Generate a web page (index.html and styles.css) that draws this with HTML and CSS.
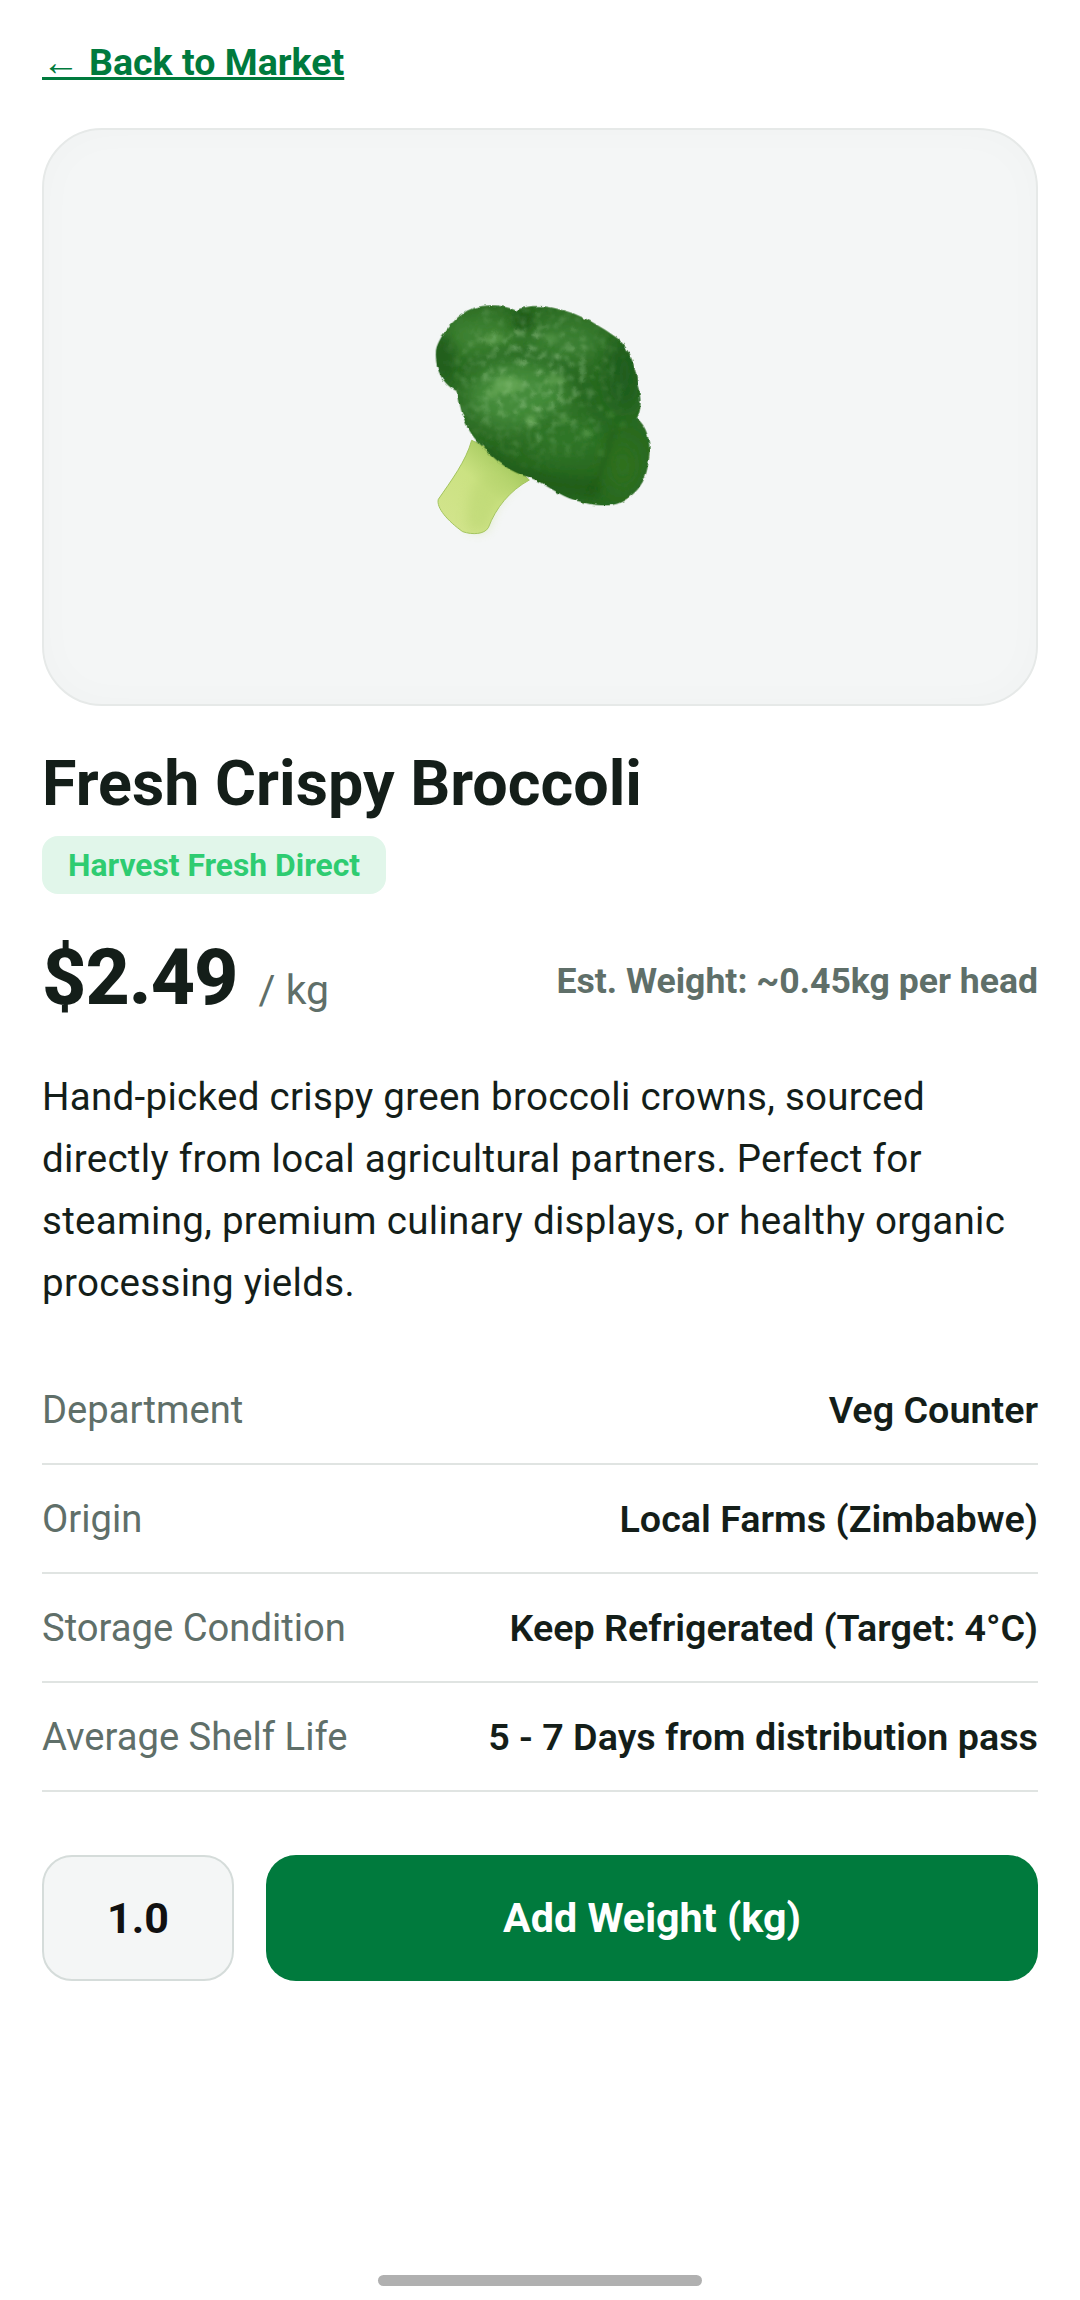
FILE: index.html

```html
<!DOCTYPE html>
<html lang="en">
<head>
  <meta charset="UTF-8" />
  <meta name="viewport" content="width=device-width, initial-scale=1.0"/>
  <title>Fresh Crispy Broccoli</title>
  <link rel="stylesheet" href="styles.css">
</head>
<body>
  <div class="container">
    <a class="back-link" href="#">← Back to Market</a>

    <div class="product-image">
      <svg class="broccoli" viewBox="0 0 840 810" width="280" height="270" aria-hidden="true">
        <defs>
          <filter id="rough" filterUnits="userSpaceOnUse" x="0" y="0" width="840" height="810">
            <feTurbulence type="fractalNoise" baseFrequency="0.05" numOctaves="2" seed="7"/>
            <feDisplacementMap in="SourceGraphic" scale="10" xChannelSelector="R" yChannelSelector="G"/>
          </filter>
          <filter id="mottle" filterUnits="userSpaceOnUse" x="0" y="0" width="840" height="810">
            <feTurbulence type="fractalNoise" baseFrequency="0.045" numOctaves="3" seed="11"/>
            <feColorMatrix values="0 0 0 0 0.42  0 0 0 0 0.68  0 0 0 0 0.36  4 0 0 0 -2.1"/>
            <feGaussianBlur stdDeviation="3"/>
          </filter>
          <filter id="soft" filterUnits="userSpaceOnUse" x="0" y="0" width="840" height="810"><feGaussianBlur stdDeviation="3"/></filter>
          <filter id="blur-big" filterUnits="userSpaceOnUse" x="0" y="0" width="840" height="810"><feGaussianBlur stdDeviation="30"/></filter>
          <filter id="blur-mid" filterUnits="userSpaceOnUse" x="0" y="0" width="840" height="810"><feGaussianBlur stdDeviation="16"/></filter>
          <filter id="blur-small" filterUnits="userSpaceOnUse" x="0" y="0" width="840" height="810"><feGaussianBlur stdDeviation="7"/></filter>
          <linearGradient id="stem" x1="0.1" y1="0.9" x2="0.7" y2="0.2">
            <stop offset="0" stop-color="#d2e48c"/>
            <stop offset="0.6" stop-color="#cbe282"/>
            <stop offset="1" stop-color="#a9cc62"/>
          </linearGradient>
          <radialGradient id="mottle-fade" gradientUnits="userSpaceOnUse" cx="400" cy="290" r="300">
            <stop offset="0.4" stop-color="#fff"/>
            <stop offset="1" stop-color="#000"/>
          </radialGradient>
          <mask id="mottle-mask" maskUnits="userSpaceOnUse" x="0" y="0" width="840" height="810">
            <rect width="840" height="810" fill="url(#mottle-fade)"/>
          </mask>
          <clipPath id="crown-clip">
            <path d="M105 215C115 170 170 105 215 90C260 75 310 80 345 97C375 78 440 78 500 100C550 115 600 145 650 180C690 215 705 270 710 320C722 360 722 395 708 420C745 450 752 510 742 555C735 600 720 640 660 672C620 690 570 680 520 665C480 655 440 620 385 597C330 585 280 545 245 505C205 470 180 420 170 340C130 320 100 280 105 215Z"/>
          </clipPath>
        </defs>
        <path d="M212 478C195 540 150 600 112 655C105 680 140 720 185 752C215 762 250 760 262 740C285 680 325 630 385 597L300 520Z" fill="url(#stem)" stroke="#a3c45f" stroke-width="3"/>
        <path d="M225 600C205 640 190 690 200 745C225 755 250 755 262 740C272 695 300 645 340 610L270 570Z" fill="#b4d26b" opacity="0.4" filter="url(#blur-mid)"/>
        <g transform="translate(0 -8)">
          <g filter="url(#rough)">
            <g clip-path="url(#crown-clip)">
              <g filter="url(#soft)">
                <rect width="840" height="810" fill="#2a6a22"/>
                <ellipse cx="240" cy="175" rx="120" ry="65" fill="#3c8232" filter="url(#blur-big)"/>
                <ellipse cx="490" cy="190" rx="120" ry="65" fill="#3a7f30" filter="url(#blur-big)"/>
                <ellipse cx="350" cy="350" rx="150" ry="100" fill="#458c3b" filter="url(#blur-big)"/>
                <ellipse cx="500" cy="470" rx="120" ry="70" fill="#2f7427" filter="url(#blur-big)"/>
                <ellipse cx="125" cy="240" rx="35" ry="70" fill="#215f1c" filter="url(#blur-mid)"/>
                <ellipse cx="365" cy="125" rx="28" ry="30" fill="#1d5618" filter="url(#blur-mid)"/>
                <path d="M180 280C230 215 400 200 500 270C545 310 590 400 620 480" fill="none" stroke="#246420" stroke-width="22" opacity="0.55" filter="url(#blur-mid)"/>
                <path d="M230 510C300 590 440 630 600 630" fill="none" stroke="#1f5a19" stroke-width="60" opacity="0.75" filter="url(#blur-mid)"/>
                <ellipse cx="670" cy="290" rx="45" ry="110" fill="#1f5c1a" filter="url(#blur-big)"/>
                <ellipse cx="665" cy="560" rx="50" ry="80" fill="#2f701f" filter="url(#blur-big)"/>
                <path d="M640 450C615 520 600 600 565 650" fill="none" stroke="#1f5718" stroke-width="12" opacity="0.5" filter="url(#blur-small)"/>
                <g mask="url(#mottle-mask)">
                  <rect width="840" height="810" filter="url(#mottle)" opacity="0.5"/>
                </g>
                <g fill="#73b260" filter="url(#blur-small)">
                  <ellipse cx="320" cy="320" rx="44" ry="26" opacity="0.6"/>
                  <ellipse cx="275" cy="345" rx="22" ry="14" opacity="0.5"/>
                  <ellipse cx="460" cy="305" rx="26" ry="14" opacity="0.5"/>
                  <ellipse cx="280" cy="180" rx="30" ry="16" opacity="0.4"/>
                  <ellipse cx="450" cy="180" rx="20" ry="14" opacity="0.35"/>
                  <ellipse cx="390" cy="425" rx="16" ry="16" opacity="0.6"/>
                  <ellipse cx="493" cy="425" rx="13" ry="9" opacity="0.55"/>
                  <ellipse cx="558" cy="465" rx="16" ry="9" opacity="0.6"/>
                  <ellipse cx="600" cy="522" rx="9" ry="7" opacity="0.4"/>
                  <ellipse cx="630" cy="408" rx="10" ry="9" opacity="0.35"/>
                  <ellipse cx="665" cy="440" rx="9" ry="7" opacity="0.3"/>
                </g>
              </g>
            </g>
          </g>
        </g>
      </svg>
    </div>

    <h1 class="product-title">Fresh Crispy Broccoli</h1>
    <span class="tag">Harvest Fresh Direct</span>

    <div class="price-row">
      <div class="price">$2.49 <span class="unit">/ kg</span></div>
      <div class="est-weight">Est. Weight: ~0.45kg per head</div>
    </div>

    <p class="description">Hand-picked crispy green broccoli crowns, sourced directly from local agricultural partners. Perfect for steaming, premium culinary displays, or healthy organic processing yields.</p>

    <div class="spec-list">
      <div class="spec-row"><span class="spec-label">Department</span><span class="spec-value">Veg Counter</span></div>
      <div class="spec-row"><span class="spec-label">Origin</span><span class="spec-value">Local Farms (Zimbabwe)</span></div>
      <div class="spec-row"><span class="spec-label">Storage Condition</span><span class="spec-value">Keep Refrigerated (Target: 4°C)</span></div>
      <div class="spec-row"><span class="spec-label">Average Shelf Life</span><span class="spec-value">5 - 7 Days from distribution pass</span></div>
    </div>

    <div class="actions">
      <div class="qty">1.0</div>
      <button class="btn">Add Weight (kg)</button>
    </div>
  </div>

  <div class="home-bar"></div>
</body>
</html>
```

FILE: styles.css

```css
* {
  margin: 0;
  padding: 0;
  box-sizing: border-box;
  font-family: 'Roboto', sans-serif;
}
body {
  background: #fff;
  color: #141e19;
  width: 1080px;
  height: 2300px;
  position: relative;
  overflow: hidden;
}
.container {
  padding: 40px 42px 0;
}
.back-link {
  display: inline-block;
  color: #007a3d;
  font-size: 37.6px;
  line-height: 44px;
  font-weight: 700;
  text-decoration: underline;
  text-decoration-thickness: 3px;
}
.product-image {
  margin-top: 44px;
  height: 578px;
  background: #f4f6f6;
  border: 2px solid #e6e9e8;
  border-radius: 60px;
  box-shadow: inset 0 0 44px rgba(0, 0, 0, 0.018);
  display: flex;
  align-items: center;
  justify-content: center;
}
.broccoli {
  display: block;
  margin-left: 2px;
  margin-top: -2px;
}
.product-title {
  margin-top: 42px;
  font-size: 62.8px;
  line-height: 72px;
  font-weight: 700;
}
.tag {
  display: inline-block;
  margin-top: 16px;
  padding: 0 26px;
  height: 58px;
  line-height: 58px;
  background: #e1f6ea;
  color: #2ecc71;
  font-size: 31.8px;
  font-weight: 700;
  border-radius: 16px;
}
.price-row {
  display: flex;
  justify-content: space-between;
  align-items: center;
  margin-top: 38px;
}
.price {
  font-size: 77px;
  line-height: 92px;
  font-weight: 800;
  letter-spacing: -1px;
}
.unit {
  font-size: 41px;
  font-weight: 400;
  letter-spacing: 0;
  color: #5f6f69;
  margin-left: 3px;
}
.est-weight {
  font-size: 35.6px;
  line-height: 40px;
  margin-bottom: 6px;
  font-weight: 700;
  color: #5f6f69;
}
.description {
  margin-top: 30px;
  font-size: 38.5px;
  line-height: 62px;
  letter-spacing: 0.3px;
}
.spec-list {
  margin-top: 42px;
}
.spec-row {
  display: flex;
  justify-content: space-between;
  align-items: center;
  height: 109px;
  border-bottom: 2px solid #e0e4e2;
  font-size: 37.7px;
}
.spec-label {
  color: #5f6f69;
  font-size: 38.2px;
}
.spec-value {
  font-weight: 600;
}
.actions {
  display: flex;
  gap: 32px;
  margin-top: 63px;
}
.qty {
  width: 192px;
  height: 126px;
  display: flex;
  align-items: center;
  justify-content: center;
  background: #f4f6f6;
  border: 2px solid #d5dcda;
  border-radius: 30px;
  font-size: 43px;
  font-weight: 700;
  color: #111;
}
.btn {
  flex: 1;
  height: 126px;
  background: #007a3d;
  color: #fff;
  border: none;
  border-radius: 30px;
  font-size: 41.25px;
  font-weight: 700;
}
.home-bar {
  position: absolute;
  left: 378px;
  top: 2275px;
  width: 324px;
  height: 11px;
  background: #b0b0b0;
  border-radius: 6px;
}
```
